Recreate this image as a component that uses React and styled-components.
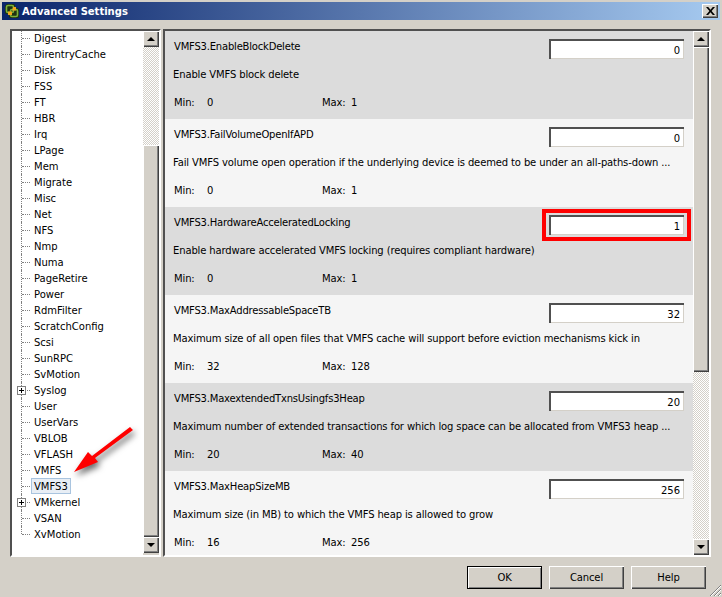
import React from 'react';
import styled, { createGlobalStyle } from 'styled-components';

const GlobalStyle = createGlobalStyle`
  html, body {
    margin: 0;
    background: #d4d0c8;
  }
`;

const fontStack = `'DejaVu Sans', Verdana, sans-serif`;
const dither = `repeating-conic-gradient(#d4d0c8 0 25%, #ffffff 0 50%) 0 0 / 2px 2px`;
const raised = `
  box-shadow: inset 1px 1px 0 #ffffff, inset -1px -1px 0 #404040, inset -2px -2px 0 #808080;
`;

const Window = styled.div`
  position: relative;
  width: 722px;
  height: 597px;
  box-sizing: border-box;
  padding: 2px;
  display: flex;
  flex-direction: column;
  overflow: hidden;
  background: #d4d0c8;
  font-family: ${fontStack};
  font-size: 10px;
  color: #000;
`;

const TitleBar = styled.div`
  height: 18px;
  display: flex;
  align-items: center;
  padding: 0 2px;
  gap: 2px;
  background: linear-gradient(90deg, #0a246a, #a6caf0);
  color: #fff;
  font-size: 10px;
  font-weight: 700;
`;

const TitleText = styled.span`
  flex: 1;
`;

const CloseButton = styled.div`
  width: 16px;
  height: 14px;
  display: flex;
  align-items: center;
  justify-content: center;
  background: #d4d0c8;
  ${raised}
`;

const Main = styled.div`
  display: flex;
  gap: 2px;
  height: 528px;
  margin: 9px 9px 0 8px;
`;

const Panel = styled.div`
  box-sizing: border-box;
  display: flex;
  border: 2px solid;
  border-color: #505050 #ffffff #ffffff #505050;
  background: #fff;
  overflow: hidden;
`;

const TreePanel = styled(Panel)`
  width: 151px;
`;

const SettingsPanel = styled(Panel)`
  flex: 1;
  background: #f5f5f5;
`;

const Tree = styled.ul`
  flex: 1;
  list-style: none;
  margin: -1px 0 0;
  padding: 0;
`;

const TreeRow = styled.li`
  position: relative;
  height: 16px;
  display: flex;
  align-items: center;

  &::before {
    content: '';
    position: absolute;
    left: 9px;
    top: 0;
    height: ${({ $last }) => ($last ? '8px' : '16px')};
    border-left: 1px dotted #808080;
  }

  &::after {
    content: '';
    position: absolute;
    left: 10px;
    top: 8px;
    width: 8px;
    border-top: 1px dotted #808080;
  }
`;

const TreeLabel = styled.span`
  margin-left: 19px;
  padding: 0 2px;
  height: 14px;
  line-height: 16px;
  border: 1px solid ${({ $selected }) => ($selected ? '#a9c4df' : 'transparent')};
  background: ${({ $selected }) => ($selected ? '#e8eef5' : 'transparent')};
`;

const Expander = styled.span`
  position: absolute;
  z-index: 1;
  left: 5px;
  top: 4px;
  width: 9px;
  height: 9px;
  box-sizing: border-box;
  border: 1px solid #808080;
  background:
    linear-gradient(#000, #000) center / 5px 1px no-repeat,
    linear-gradient(#000, #000) center / 1px 5px no-repeat,
    #fff;
`;

const Scrollbar = styled.div`
  width: 16px;
  flex: none;
  display: flex;
  flex-direction: column;
  background: #d4d0c8;
`;

const ScrollButton = styled.div`
  height: 16px;
  flex: none;
  display: flex;
  align-items: center;
  justify-content: center;
  background: #d4d0c8;
  ${raised}

  &::after {
    content: '';
    border-left: 4px solid transparent;
    border-right: 4px solid transparent;
    ${({ $down }) => ($down ? 'border-top' : 'border-bottom')}: 4px solid #000;
  }
`;

const Track = styled.div`
  height: ${({ $size }) => $size}px;
  flex: ${({ $grow }) => ($grow ? 1 : 'none')};
  background: ${dither};
`;

const Thumb = styled.div`
  height: ${({ $size }) => $size}px;
  flex: none;
  background: #d4d0c8;
  ${raised}
`;

const Rows = styled.div`
  flex: 1;
  min-width: 0;
  overflow: hidden;
`;

const Row = styled.div`
  height: 88px;
  flex: none;
  box-sizing: border-box;
  padding: 8px 9px 0 9px;
  letter-spacing: -0.13px;
  background: ${({ $shaded }) => ($shaded ? '#dcdcdc' : '#f5f5f5')};
`;

const RowHead = styled.div`
  display: flex;
  justify-content: space-between;
  align-items: flex-start;
  height: 20px;
`;

const Line = styled.div`
  height: 14px;
  line-height: 16px;
  white-space: nowrap;
`;

const SettingName = styled(Line)`
  letter-spacing: -0.2px;
`;

const Description = styled(Line)`
  margin: 8px 0 0 -1px;
`;

const Limits = styled.div`
  display: flex;
  margin-top: 14px;
  height: 14px;
  line-height: 16px;
`;

const LimitLabel = styled.span`
  width: ${({ $width }) => $width}px;
`;

const InputWrap = styled.div`
  position: relative;

  ${({ $flagged }) => $flagged && `
    &::after {
      content: '';
      position: absolute;
      inset: -6px -7px;
      border: 4px solid #ff0000;
      pointer-events: none;
    }
  `}
`;

const ValueInput = styled.input`
  display: block;
  width: 135px;
  height: 20px;
  box-sizing: border-box;
  padding: 2px 4px 0 4px;
  border: 0;
  outline: 0;
  background: #fff;
  font: 10px ${fontStack};
  color: #000;
  text-align: right;
  box-shadow: inset 2px 2px 0 #505050, inset -1px -1px 0 #d4d0c8;
`;

const Footer = styled.div`
  display: flex;
  justify-content: flex-end;
  gap: 7px;
  margin: 9px 14px 0 0;
`;

const Button = styled.button`
  width: 75px;
  height: 23px;
  padding: 0;
  border: 0;
  background: #d4d0c8;
  font: 10px ${fontStack};
  letter-spacing: -0.13px;
  color: #000;
  ${({ $primary }) => $primary
    ? `box-shadow: inset 0 0 0 1px #000, inset 2px 2px 0 #ffffff, inset -2px -2px 0 #808080;`
    : raised}
`;

const ResizeGrip = styled.svg`
  position: absolute;
  right: 0;
  bottom: 0;
`;

const RedArrow = styled.svg`
  position: absolute;
  left: 60px;
  top: 415px;
  filter: drop-shadow(2px 4px 3px rgba(0, 0, 0, 0.6));
`;

const treeItems = [
  'Digest', 'DirentryCache', 'Disk', 'FSS', 'FT', 'HBR', 'Irq', 'LPage', 'Mem', 'Migrate', 'Misc',
  'Net', 'NFS', 'Nmp', 'Numa', 'PageRetire', 'Power', 'RdmFilter', 'ScratchConfig', 'Scsi', 'SunRPC',
  'SvMotion', 'Syslog', 'User', 'UserVars', 'VBLOB', 'VFLASH', 'VMFS', 'VMFS3', 'VMkernel', 'VSAN', 'XvMotion',
];
const expandable = ['Syslog', 'VMkernel'];

const settings = [
  { name: 'VMFS3.EnableBlockDelete', text: 'Enable VMFS block delete', value: 0, min: 0, max: 1 },
  { name: 'VMFS3.FailVolumeOpenIfAPD', text: 'Fail VMFS volume open operation if the underlying device is deemed to be under an all-paths-down ...', value: 0, min: 0, max: 1 },
  { name: 'VMFS3.HardwareAcceleratedLocking', text: 'Enable hardware accelerated VMFS locking (requires compliant hardware)', value: 1, min: 0, max: 1, flagged: true },
  { name: 'VMFS3.MaxAddressableSpaceTB', text: 'Maximum size of all open files that VMFS cache will support before eviction mechanisms kick in', value: 32, min: 32, max: 128 },
  { name: 'VMFS3.MaxextendedTxnsUsingfs3Heap', text: 'Maximum number of extended transactions for which log space can be allocated from VMFS3 heap ...', value: 20, min: 20, max: 40 },
  { name: 'VMFS3.MaxHeapSizeMB', text: 'Maximum size (in MB) to which the VMFS heap is allowed to grow', value: 256, min: 16, max: 256 },
];

const AppIcon = () => (
  <svg width="16" height="16" viewBox="0 0 16 16">
    <path d="M3 1h7l1 1v3h2l2 1v8l-1 1H6l-1-1v-3H2l-1-1V3z" fill="#1f3311" />
    <rect x="2.5" y="2.5" width="7" height="7" rx="1.5" fill="none" stroke="#7cb13a" strokeWidth="1.6" />
    <rect x="6.5" y="6.5" width="7" height="7" rx="1.5" fill="none" stroke="#7cb13a" strokeWidth="1.6" />
    <path d="M9 4h3v3.5H8V12H4V8.5h4z" fill="#f0a81e" />
  </svg>
);

const App = () => (
  <Window>
    <GlobalStyle />
    <TitleBar>
      <AppIcon />
      <TitleText>Advanced Settings</TitleText>
      <CloseButton>
        <svg width="9" height="8" viewBox="0 0 9 8">
          <path d="M0 0h2.2l2.3 2.8L6.8 0H9L5.6 4 9 8H6.8L4.5 5.2 2.2 8H0l3.4-4z" fill="#000" />
        </svg>
      </CloseButton>
    </TitleBar>

    <Main>
      <TreePanel>
        <Tree>
          {treeItems.map((item, i) => (
            <TreeRow key={item} $last={i === treeItems.length - 1}>
              {expandable.includes(item) && <Expander />}
              <TreeLabel $selected={item === 'VMFS3'}>{item}</TreeLabel>
            </TreeRow>
          ))}
        </Tree>
        <Scrollbar>
          <ScrollButton />
          <Track $size={98} />
          <Thumb $size={392} />
          <ScrollButton $down />
        </Scrollbar>
      </TreePanel>

      <SettingsPanel>
        <Rows>
          {settings.map((s, i) => (
            <Row key={s.name} $shaded={i % 2 === 0}>
              <RowHead>
                <SettingName>{s.name}</SettingName>
                <InputWrap $flagged={s.flagged}>
                  <ValueInput readOnly value={s.value} />
                </InputWrap>
              </RowHead>
              <Description>{s.text}</Description>
              <Limits>
                <LimitLabel $width={33}>Min:</LimitLabel>
                <LimitLabel $width={115}>{s.min}</LimitLabel>
                <LimitLabel $width={29}>Max:</LimitLabel>
                <LimitLabel $width={40}>{s.max}</LimitLabel>
              </Limits>
            </Row>
          ))}
        </Rows>
        <Scrollbar>
          <ScrollButton />
          <Thumb $size={325} />
          <Track $grow />
          <ScrollButton $down />
        </Scrollbar>
      </SettingsPanel>
    </Main>

    <Footer>
      <Button $primary>OK</Button>
      <Button>Cancel</Button>
      <Button>Help</Button>
    </Footer>

    <ResizeGrip width="13" height="13" viewBox="0 0 13 13">
      <path d="M12 1L1 12M12 5L5 12M12 9L9 12" stroke="#808080" strokeWidth="1" />
      <path d="M12 2L2 12M12 6L6 12M12 10L10 12" stroke="#ffffff" strokeWidth="1" />
    </ResizeGrip>

    <RedArrow width="80" height="65" viewBox="60 415 80 65">
      <polygon points="74,472 88,452 92,456 130,427 133,430 95,458 98,462" fill="#f00" />
    </RedArrow>
  </Window>
);

export default App;
